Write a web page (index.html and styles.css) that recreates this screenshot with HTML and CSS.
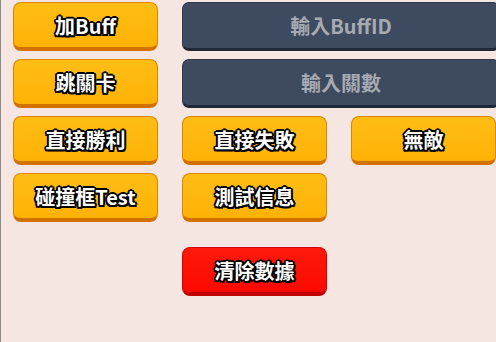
FILE: index.html
```html
<!DOCTYPE html>
<html lang="zh-Hant">
<head>
    <meta charset="utf-8">
    <meta name="viewport" content="width=device-width, initial-scale=1.0">
    <title>Debug Panel</title>
    <link rel="stylesheet" href="styles.css">
</head>
<body>

<!-- Debug Panel -->
<div id="debug-panel">
    <button class="btn">加Buff</button>
    <input class="field" type="text" placeholder="輸入BuffID">

    <button class="btn">跳關卡</button>
    <input class="field" type="text" placeholder="輸入關數">

    <button class="btn">直接勝利</button>
    <button class="btn">直接失敗</button>
    <button class="btn">無敵</button>

    <button class="btn">碰撞框Test</button>
    <button class="btn">測試信息</button>
    <div></div>

    <div></div>
    <button class="btn btn-red">清除數據</button>
</div>

</body>
</html>
```

FILE: styles.css
```css
/* General Layout */
body {
    margin: 0;
    padding: 0;
    height: 100vh;
    background-color: #f6e6e1;
    border-left: 1px solid #8c8a8a;
    box-sizing: border-box;
    font-family: 'Noto Sans CJK TC', 'Noto Sans', sans-serif;
    overflow: hidden;
}

/* Panel Grid */
#debug-panel {
    display: grid;
    grid-template-columns: 145px 145px 145px;
    grid-auto-rows: 49px;
    column-gap: 24px;
    row-gap: 8px;
    padding: 2px 0 0 12px;
}

/* Orange Buttons */
.btn {
    height: 49px;
    padding: 0;
    font-family: inherit;
    font-size: 20px;
    font-weight: bold;
    color: white;
    background: linear-gradient(#ffbd14, #ffb206);
    border: 1px solid #dc8500;
    border-bottom: 4px solid #d27000;
    border-radius: 8px;
    cursor: pointer;
    text-shadow:
        -1.5px -1.5px 0 #000, 1.5px -1.5px 0 #000,
        -1.5px 1.5px 0 #000, 1.5px 1.5px 0 #000,
        0 -2px 0 #000, 0 2px 0 #000,
        -2px 0 0 #000, 2px 0 0 #000;
}

.btn-red {
    margin-top: 17px;
    background: linear-gradient(#ff1a0a, #fc0800);
    border-color: #d40000;
    border-bottom-color: #c20000;
}

/* Text Fields */
.field {
    grid-column: span 2;
    height: 49px;
    margin-right: -4px;
    box-sizing: border-box;
    font-family: inherit;
    font-size: 20px;
    font-weight: bold;
    text-align: center;
    color: white;
    background: #3e4a5f;
    border: 1px solid #2f394a;
    border-bottom: 3px solid #1f2836;
    border-radius: 7px;
    outline: none;
}

.field::placeholder {
    color: #a6aab1;
}
```
